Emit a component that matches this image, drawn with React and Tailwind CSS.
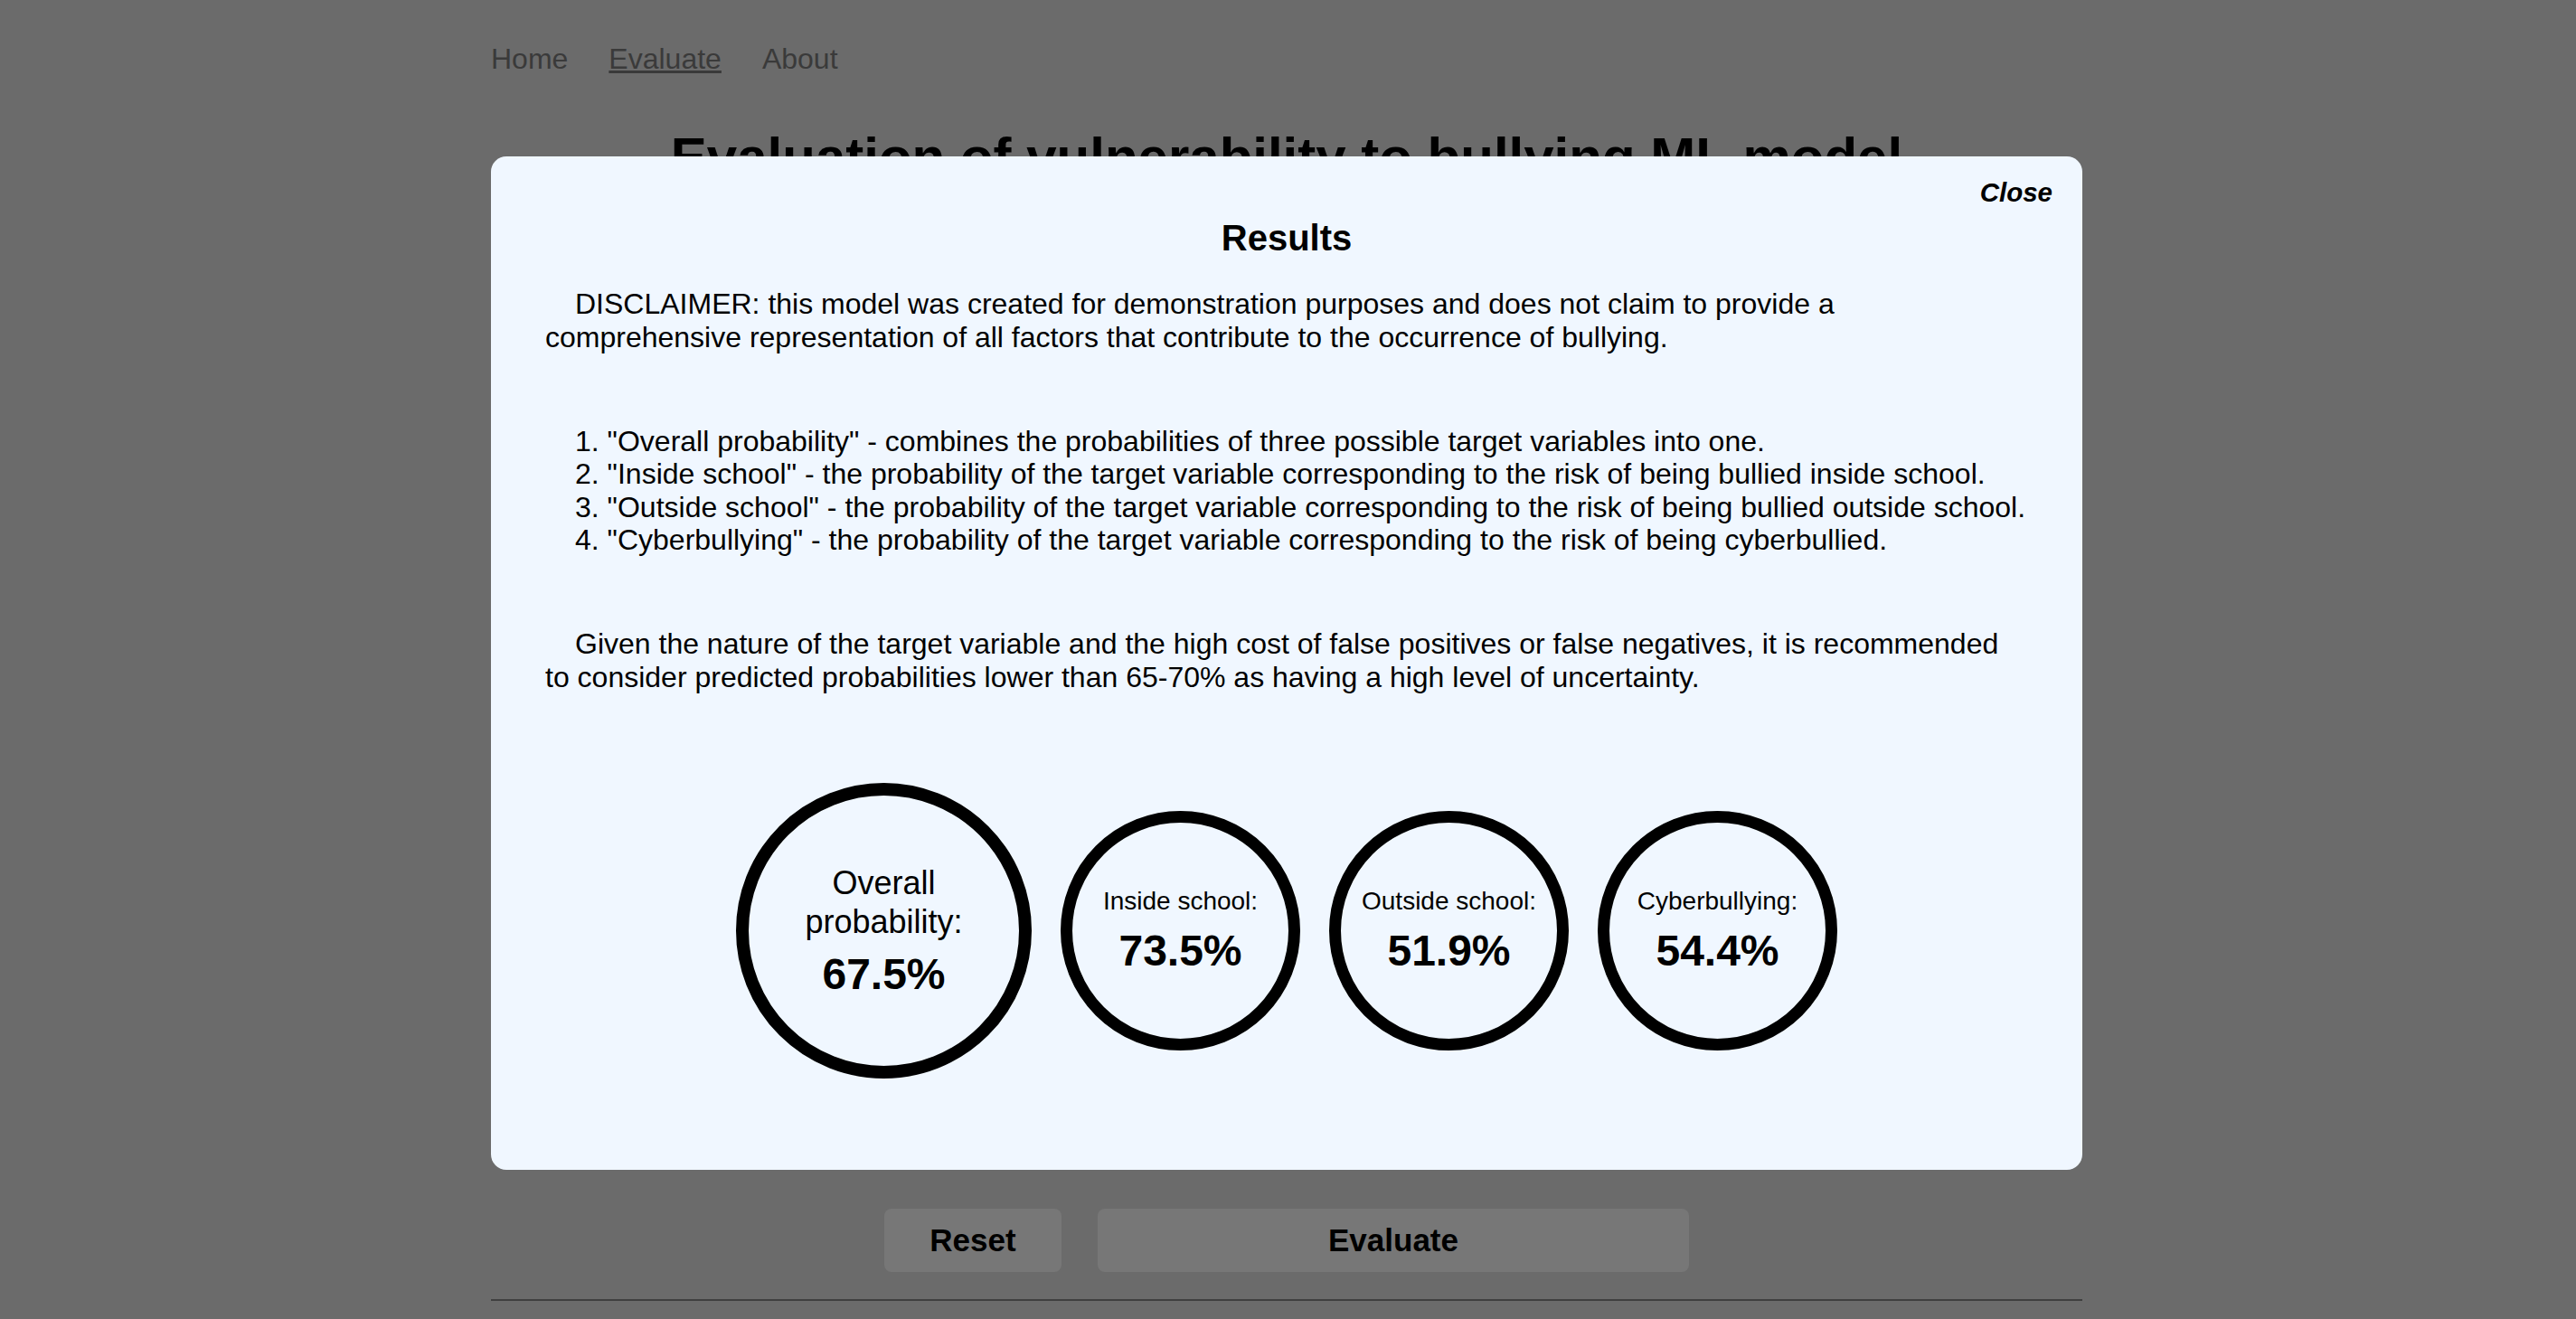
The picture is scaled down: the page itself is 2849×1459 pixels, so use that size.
export default function App() {
  const scores = [
    { label: "Inside school:", value: "73.5%" },
    { label: "Outside school:", value: "51.9%" },
    { label: "Cyberbullying:", value: "54.4%" },
  ];

  return (
    <div className="min-h-screen bg-[#6b6b6b] font-['Liberation_Sans',Arial,sans-serif]">
      {/* Page behind the dialog */}
      <div className="w-[1760px] ml-[543px]">
        <nav className="flex gap-[45px] pt-[47px] text-[32px] leading-[37px] text-[#3a3a3a]">
          <a>Home</a>
          <a className="underline">Evaluate</a>
          <a>About</a>
        </nav>
        <h1 className="mt-[55px] text-center text-[60px] leading-[69px] font-bold text-black">
          Evaluation of vulnerability to bullying ML model
        </h1>

        {/* form area hidden under the dialog */}
        <div className="h-[1129px]"></div>

        <div className="flex justify-center gap-[40px]">
          <button className="w-[196px] h-[70px] rounded-[8px] bg-[#777777] text-[35px] font-bold text-black">
            Reset
          </button>
          <button className="w-[654px] h-[70px] rounded-[8px] bg-[#777777] text-[35px] font-bold text-black">
            Evaluate
          </button>
        </div>
        <div className="mt-[30px] h-[2px] bg-[#3f3f3f]"></div>
      </div>

      {/* Results dialog */}
      <div className="fixed top-[173px] left-[543px] w-[1760px] h-[1121px] rounded-[17px] bg-[#f0f7ff] pt-[23px] text-black">
        <div className="flex justify-end pr-[33px]">
          <button className="text-[29.5px] leading-[34px] font-bold italic">Close</button>
        </div>
        <div className="px-[60px]">
          <h2 className="mt-[10px] text-center text-[40px] leading-[46px] font-bold">Results</h2>

          <p className="mt-[32px] text-[32px] leading-[36.5px] whitespace-nowrap">
            <span className="pl-[33px]">DISCLAIMER: this model was created for demonstration purposes and does not claim to provide a</span>
            <br />
            comprehensive representation of all factors that contribute to the occurrence of bullying.
          </p>

          <ol className="mt-[79px] list-decimal list-inside pl-[33px] text-[32px] leading-[36.3px] whitespace-nowrap">
            <li>"Overall probability" - combines the probabilities of three possible target variables into one.</li>
            <li>"Inside school" - the probability of the target variable corresponding to the risk of being bullied inside school.</li>
            <li>"Outside school" - the probability of the target variable corresponding to the risk of being bullied outside school.</li>
            <li>"Cyberbullying" - the probability of the target variable corresponding to the risk of being cyberbullied.</li>
          </ol>

          <p className="mt-[79px] text-[32px] leading-[36.5px] whitespace-nowrap">
            <span className="pl-[33px]">Given the nature of the target variable and the high cost of false positives or false negatives, it is recommended</span>
            <br />
            to consider predicted probabilities lower than 65-70% as having a high level of uncertainty.
          </p>

          <div className="mt-[99px] flex justify-center items-center gap-[32px]">
            <div className="w-[327px] h-[327px] rounded-full border-[14px] border-black flex flex-col items-center justify-center text-center">
              <div className="text-[36px] leading-[43px]">
                Overall
                <br />
                probability:
              </div>
              <div className="mt-[9px] text-[48px] leading-[55px] font-bold">67.5%</div>
            </div>
            {scores.map((s) => (
              <div
                key={s.label}
                className="w-[265px] h-[265px] rounded-full border-[13px] border-black flex flex-col items-center justify-center text-center"
              >
                <div className="text-[28px] leading-[32px]">{s.label}</div>
                <div className="mt-[11px] text-[48px] leading-[55px] font-bold">{s.value}</div>
              </div>
            ))}
          </div>
        </div>
      </div>
    </div>
  );
}
